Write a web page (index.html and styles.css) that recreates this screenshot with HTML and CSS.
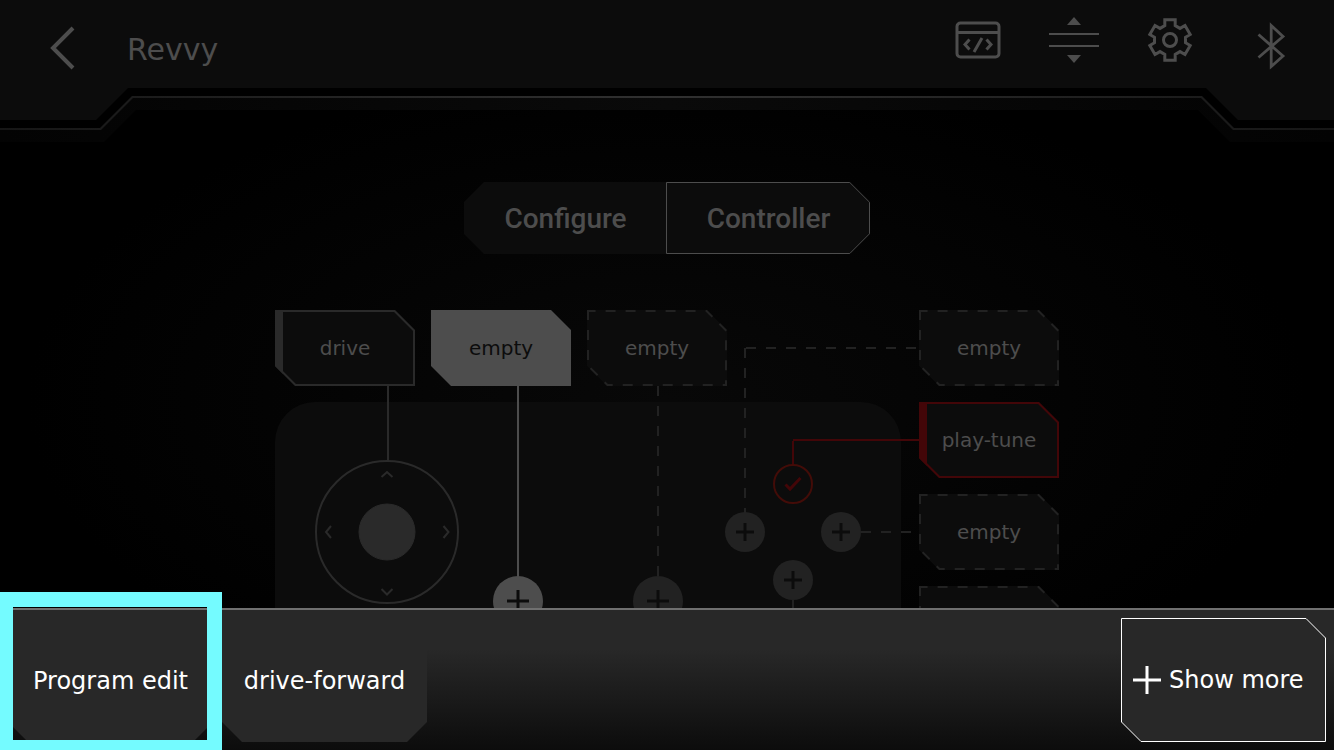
FILE: index.html
```html
<!DOCTYPE html>
<html lang="en">
<head>
<meta charset="utf-8">
<meta name="viewport" content="width=device-width, initial-scale=1">
<title>Revvy</title>
<link rel="stylesheet" href="styles.css">
</head>
<body>
<svg class="defs" aria-hidden="true">
  <symbol id="block-dashed" viewBox="0 0 140 76">
    <path d="M0 0V56L20 76H140V20L120 0Z" fill="#0c0c0c" stroke="#222222" stroke-width="4" stroke-dasharray="10 10"/>
  </symbol>
  <symbol id="block-solid" viewBox="0 0 140 76">
    <path d="M0 0V56L20 76H140V20L120 0Z" fill="#0c0c0c" stroke="currentColor" stroke-width="4"/>
    <path d="M0 0H8V76H0Z" fill="currentColor"/>
  </symbol>
</svg>
<div class="app">
  <header class="header">
    <div class="band"></div>
    <div class="line"></div>
    <div class="gap"></div>
    <div class="bar">
      <button class="icon-button back" aria-label="Back">
        <svg width="26" height="44" viewBox="0 0 26 44" fill="none" stroke="currentColor" stroke-width="4"><path d="M24 2L4 22L24 42"/></svg>
      </button>
      <h1 class="title">Revvy</h1>
      <nav class="tools" aria-label="Tools">
        <button class="icon-button" aria-label="Code">
          <svg width="50" height="60" viewBox="0 0 50 60" fill="none" stroke="currentColor" stroke-width="3"><rect x="4" y="13" width="42" height="34" rx="3.5"/><path d="M4 22.500H46M16.500 29.500L12 34.500L16.500 39.500M33.500 29.500L38 34.500L33.500 39.500M29 28L21 42"/></svg>
        </button>
        <button class="icon-button" aria-label="Split view">
          <svg width="50" height="60" viewBox="0 0 50 60" fill="currentColor"><path d="M25 7L32 15H18ZM0 23H50V25H0ZM0 35H50V37H0ZM25 53L18 45H32Z"/></svg>
        </button>
        <button class="icon-button" aria-label="Settings">
          <svg width="50" height="60" viewBox="0 0 50 60" fill="none" stroke="currentColor" stroke-width="3"><circle cx="25" cy="30" r="6.500"/><path d="M19.800 9.800H30.200V15.600L35 18.400L40 15.500L45.200 24.500L40.500 27.300V32.700L45.200 35.500L40 44.500L35 41.600L30.200 44.400V50.200H19.800V44.400L15 41.600L10 44.500L4.800 35.500L9.500 32.700V27.300L4.800 24.500L10 15.500L15 18.400L19.800 15.600Z"/></svg>
        </button>
        <button class="icon-button" aria-label="Bluetooth">
          <svg width="50" height="60" viewBox="0 0 50 60" fill="none" stroke="currentColor" stroke-width="2.800"><path d="M17.500 24.500L42 46L30.200 56.500V15.500L42 26.500L17.500 47.500"/></svg>
        </button>
      </nav>
    </div>
  </header>

  <main class="main">
    <div class="tabs">
      <button class="tab tab-left">Configure</button>
      <button class="tab tab-right">
        <svg class="frame" width="204" height="72" viewBox="0 0 204 72" fill="#0c0c0c" stroke="#4d4d4d"><path d="M.5 .5H183.800L203.500 20.200V51.800L183.800 71.500H.5Z"/></svg>
        <span>Controller</span>
      </button>
    </div>

    <div class="canvas">
      <svg class="wires" width="784" height="400" viewBox="0 0 784 400" fill="none" stroke-width="2">
        <path d="M0 400V132A40 40 0 0 1 40 92H586A40 40 0 0 1 626 132V400Z" fill="#0c0c0c"/>
        <g stroke="#2a2a2a">
          <path d="M113 76V151"/>
          <circle cx="112" cy="222" r="71"/>
          <circle cx="112" cy="222" r="28" fill="#2a2a2a" stroke-width="1"/>
          <path d="M106.500 167L112 162L117.500 167M106.500 279L112 284.500L117.500 279M56 216L51 222L56 228M168.500 216L173.500 222L168.500 228"/>
        </g>
        <path d="M243 76V267" stroke="#4d4d4d"/>
        <g stroke="#222222">
          <path d="M383 76V267M470 38V203M471 38H644M586 222H644" stroke-dasharray="10 10"/>
          <path d="M518 290V400"/>
        </g>
        <path d="M518 154V131M518 130H644" stroke="#430608"/>
      </svg>

      <button class="block" style="left:0;top:0"><svg class="frame neutral" width="140" height="76"><use href="#block-solid"/></svg><span>drive</span></button>
      <button class="block active" style="left:156px;top:0">empty</button>
      <button class="block" style="left:312px;top:0"><svg class="frame" width="140" height="76"><use href="#block-dashed"/></svg><span>empty</span></button>
      <button class="block" style="left:644px;top:0"><svg class="frame" width="140" height="76"><use href="#block-dashed"/></svg><span>empty</span></button>
      <button class="block" style="left:644px;top:92px"><svg class="frame red" width="140" height="76"><use href="#block-solid"/></svg><span>play-tune</span></button>
      <button class="block" style="left:644px;top:184px"><svg class="frame" width="140" height="76"><use href="#block-dashed"/></svg><span>empty</span></button>
      <button class="block" style="left:644px;top:276px" aria-label="Empty slot"><svg class="frame" width="140" height="76"><use href="#block-dashed"/></svg></button>

      <button class="node large bright" style="left:218px;top:266px" aria-label="Add to button 1"><svg width="22" height="22" viewBox="0 0 22 22"><path d="M11 0V22M0 11H22"/></svg></button>
      <button class="node large" style="left:358px;top:266px" aria-label="Add to button 2"><svg width="22" height="22" viewBox="0 0 22 22"><path d="M11 0V22M0 11H22"/></svg></button>
      <button class="node" style="left:450px;top:202px" aria-label="Add to left button"><svg width="18" height="18" viewBox="0 0 18 18"><path d="M9 0V18M0 9H18"/></svg></button>
      <button class="node" style="left:546px;top:202px" aria-label="Add to right button"><svg width="18" height="18" viewBox="0 0 18 18"><path d="M9 0V18M0 9H18"/></svg></button>
      <button class="node" style="left:498px;top:250px" aria-label="Add to bottom button"><svg width="18" height="18" viewBox="0 0 18 18"><path d="M9 0V18M0 9H18"/></svg></button>
      <button class="node checked" style="left:498px;top:154px" aria-label="Top button assigned"><svg width="18" height="16" viewBox="0 0 18 16"><path d="M1.500 8.500L6 13L16.500 2"/></svg></button>
    </div>
  </main>

  <footer class="dock">
    <button class="dock-item">Program edit</button>
    <button class="dock-item">drive-forward</button>
    <button class="more">
      <svg class="frame" width="205" height="124" viewBox="0 0 205 124" fill="#282828" stroke="#ffffff"><path d="M.5 .5H185L204.500 20V123.500H20L.5 104Z"/></svg>
      <svg class="plus" width="28" height="28" viewBox="0 0 28 28" stroke="#ffffff" stroke-width="3"><path d="M14 0V28M0 14H28"/></svg>
      <span>Show more</span>
    </button>
    <div class="highlight"></div>
  </footer>
</div>
</body>
</html>
```
FILE: styles.css
```css
* { box-sizing: border-box; }

body {
  margin: 0;
  background: #000;
  color: #4d4d4d;
  font-family: "DejaVu Sans", sans-serif;
}

button {
  margin: 0;
  padding: 0;
  border: 0;
  background: none;
  color: inherit;
  font: inherit;
  cursor: pointer;
}

svg { display: block; }
.defs { position: absolute; width: 0; height: 0; }

.app {
  display: grid;
  grid-template-rows: auto minmax(0, 1fr) auto;
  height: 100vh;
  overflow: hidden;
  background: radial-gradient(ellipse 640px 330px at 50% 400px, #080808, #000);
}

.header {
  --drop: 120px;
  --rise: 88px;
  --edge: 96px;
  --inner: 128px;
  display: grid;
  height: 142px;
}

.header > * {
  grid-area: 1 / 1;
  clip-path: polygon(0 0, 100% 0, 100% var(--drop), calc(100% - var(--edge)) var(--drop), calc(100% - var(--inner)) var(--rise), var(--inner) var(--rise), var(--edge) var(--drop), 0 var(--drop));
}

.band {
  --drop: 142px;
  --rise: 110px;
  --edge: 104px;
  --inner: 136px;
  background: linear-gradient(90deg, #030303, #0a0a0a 50%, #030303);
}

.line {
  --drop: 130px;
  --rise: 98px;
  --edge: 101px;
  --inner: 133px;
  background: linear-gradient(90deg, #161616, #303030 50%, #161616);
}

.gap {
  --drop: 128px;
  --rise: 96px;
  --edge: 100px;
  --inner: 132px;
  background: #000;
}

.bar {
  display: flex;
  align-items: flex-start;
  padding: 10px 43px 0 49px;
  background: #0c0c0c;
}

.back { padding-top: 16px; }

.title {
  flex: 1;
  margin: 0 0 0 52px;
  padding-top: 20px;
  font-size: 30px;
  font-weight: 400;
  line-height: 40px;
}

.tools { display: flex; gap: 46px; }

.main { overflow: hidden; }

.tabs {
  display: flex;
  justify-content: center;
  margin-top: 40px;
  font: 500 28px/72px Roboto, sans-serif;
}

.tab {
  position: relative;
  width: 203px;
  height: 72px;
  padding-top: 2px;
  line-height: 70px;
}

.tab span, .block span, .more span { position: relative; }

.tab-left {
  background: #0c0c0c;
  clip-path: polygon(20px 0, 100% 0, 100% 100%, 20px 100%, 0 52px, 0 20px);
}

.frame { position: absolute; left: 0; top: 0; }
.tab-right .frame { left: -1px; }
.neutral { color: #2a2a2a; }
.red { color: #430608; }

.canvas {
  position: relative;
  width: 784px;
  margin: 56px auto 0;
}

.block {
  position: absolute;
  width: 140px;
  height: 76px;
  clip-path: polygon(0 0, 120px 0, 100% 20px, 100% 100%, 20px 100%, 0 56px);
  font-size: 20px;
}

.active { background: #4d4d4d; color: #0c0c0c; }

.node {
  position: absolute;
  display: grid;
  place-items: center;
  width: 40px;
  height: 40px;
  border-radius: 50%;
  background: #222222;
  fill: none;
  stroke: #0c0c0c;
  stroke-width: 3px;
}

.large { width: 50px; height: 50px; }
.bright { background: #4d4d4d; }
.checked { background: none; border: 2px solid #430c08; stroke: #430608; }

.dock {
  position: relative;
  display: flex;
  gap: 9px;
  padding: 8px;
  border-top: 2px solid #707070;
  background: linear-gradient(#282828 28%, #0c0c0c);
  color: #fff;
  font-size: 24px;
}

.dock-item, .more {
  width: 205px;
  height: 124px;
  padding-top: 2px;
}

.dock-item {
  background: #282828;
  clip-path: polygon(0 0, 100% 0, 100% 104px, 185px 100%, 20px 100%, 0 104px);
}

.more {
  position: relative;
  display: flex;
  align-items: center;
  gap: 8px;
  margin-left: auto;
  padding: 0 0 0 12px;
}

.plus { position: relative; }

.highlight {
  position: absolute;
  left: -2px;
  top: -18px;
  width: 224px;
  height: 163px;
  border: 15px solid #74fbff;
  pointer-events: none;
}
```
